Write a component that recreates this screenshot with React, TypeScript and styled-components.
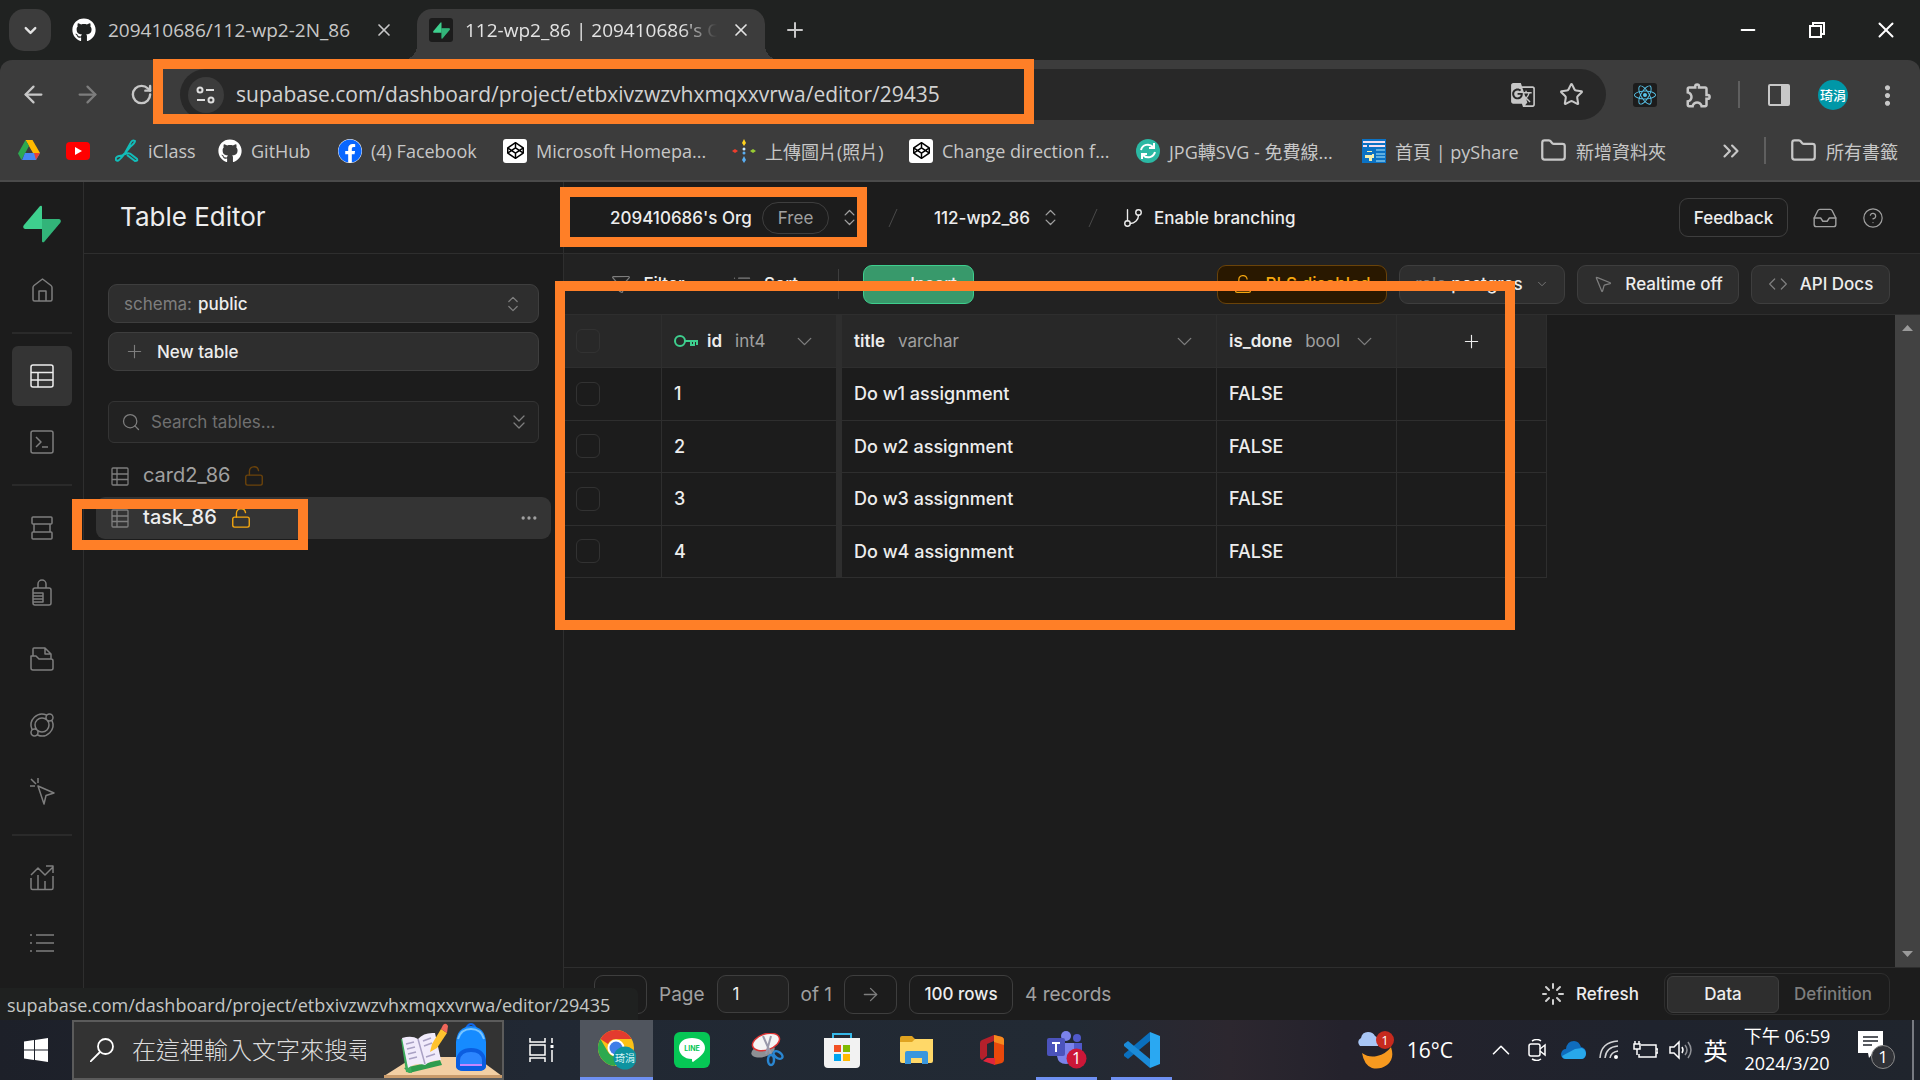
import React from "react";
import styled, { createGlobalStyle, css } from "styled-components";
import {
  ArrowLeft, ArrowRight, ChevronDown, ChevronUp, ChevronsDown, ChevronsRight,
  ChevronsUpDown, Code, Ellipsis, Filter, Folder, GitBranch, HelpCircle, Inbox, List, Loader,
  LockOpen, Minus, MousePointer2, Plus, RotateCw, Search, Star, X,
} from "lucide-react";
import { FaCodepen, FaFacebook, FaGithub, FaReact } from "react-icons/fa";
import { MdGTranslate, MdMoreVert, MdOutlineExtension } from "react-icons/md";

const ui = `"Open Sans", "Noto Sans CJK TC", sans-serif`;
const app = `Inter, "Noto Sans CJK TC", sans-serif`;
const c = {
  strip: "#202221", bar: "#3c3c3c", field: "#282828", barText: "#c7c7c7",
  bg: "#1c1c1c", surface: "#222222", raised: "#2e2e2e", line: "#2e2e2e", edge: "#3e3e3e",
  text: "#ededed", mute: "#a0a0a0", dim: "#7e7e7e", green: "#3ecf8e", mark: "#ff7f27",
};

const Global = createGlobalStyle`
  *, *::before, *::after { box-sizing: border-box; }
  body { margin: 0; background: ${c.bg}; overflow: hidden; }
  button, input { font: inherit; color: inherit; margin: 0; }
  button { background: none; border: 0; padding: 0; cursor: pointer; }
  svg { display: block; flex: none; }
  a { color: inherit; text-decoration: none; }
`;

const Screen = styled.div`
  position: relative;
  display: grid;
  grid-template-rows: auto minmax(0, 1fr) auto;
  height: 100vh;
  overflow: hidden;
  font-family: ${app};
  color: ${c.text};
`;

/* ---------- browser chrome ---------- */
const Browser = styled.header`
  background: ${c.strip};
  font-family: ${ui};
  color: ${c.barText};
  border-bottom: 2px solid #4a4a4a;
`;
const TabStrip = styled.div`
  display: flex;
  align-items: flex-end;
  height: 60px;
  padding-left: 9px;
`;
const TabSearch = styled.button`
  display: grid;
  place-items: center;
  width: 42px;
  height: 42px;
  margin-bottom: 9px;
  border-radius: 15px;
  background: ${c.bar};
`;
const Tab = styled.div<{ $active?: boolean }>`
  position: relative;
  display: flex;
  align-items: center;
  gap: 12px;
  width: 348px;
  height: 51px;
  padding: 0 12px 9px;
  margin-left: 9px;
  font-size: 19px;
  ${p => p.$active && css`
    color: #e3e3e3;
    background: ${c.bar};
    border-radius: 15px 15px 0 0;
    &::before, &::after {
      content: "";
      position: absolute;
      bottom: 0;
      left: -15px;
      width: 15px;
      height: 15px;
      background: radial-gradient(circle at 0 0, transparent 15px, ${c.bar} 15px);
    }
    &::after {
      left: 100%;
      background: radial-gradient(circle at 100% 0, transparent 15px, ${c.bar} 15px);
    }
  `}
`;
const TabTitle = styled.span<{ $fade?: boolean }>`
  flex: 1;
  min-width: 0;
  overflow: hidden;
  white-space: nowrap;
  line-height: 30px;
  ${p => p.$fade && css`mask-image: linear-gradient(90deg, #000 86%, transparent);`}
`;
const TabClose = styled.button`
  display: grid;
  place-items: center;
  width: 24px;
  height: 24px;
`;
const Favicon = styled.span`
  display: grid;
  place-items: center;
  width: 24px;
  height: 24px;
  border-radius: 3px;
  background: ${c.bg};
`;
const NewTab = styled(TabSearch)`
  margin-left: 9px;
  background: none;
`;
const WindowButtons = styled.div`
  display: flex;
  height: 60px;
  margin-left: auto;
  color: #fff;
`;
const WindowButton = styled.button`
  display: grid;
  place-items: center;
  width: 69px;
`;
const Toolbar = styled.div`
  display: flex;
  align-items: center;
  height: 69px;
  padding: 0 20px;
  border-radius: 12px 12px 0 0;
  background: ${c.bar};
`;
const NavButton = styled.button<{ $dim?: boolean }>`
  display: grid;
  place-items: center;
  width: 54px;
  height: 42px;
  color: ${p => (p.$dim ? "#7d7d7d" : c.barText)};
`;
const NavGroup = styled.div`
  display: flex;
  margin: 0 12px 0 -14px;
`;
const Omnibox = styled.div`
  flex: 1;
  display: flex;
  align-items: center;
  gap: 12px;
  height: 51px;
  padding: 0 20px 0 8px;
  border-radius: 26px;
  background: ${c.field};
`;
const SiteInfo = styled.button`
  display: grid;
  place-items: center;
  width: 36px;
  height: 36px;
  border-radius: 50%;
  background: ${c.bar};
`;
const Url = styled.input`
  flex: 1;
  min-width: 0;
  height: 48px;
  padding: 0 0 2px;
  border: 0;
  outline: 0;
  background: none;
  font-size: 21px;
  color: #d2d2d2;
`;
const IconButton = styled.button<{ $w?: number }>`
  display: grid;
  place-items: center;
  width: ${p => p.$w ?? 30}px;
  height: 30px;
`;
const Extensions = styled.div`
  display: flex;
  align-items: center;
  gap: 24px;
  margin-left: 24px;
`;
const Rule = styled.span`
  width: 2px;
  height: 27px;
  background: #5f5f5f;
`;
const Avatar = styled.span`
  display: grid;
  place-items: center;
  width: 30px;
  height: 30px;
  border-radius: 50%;
  background: #0097a7;
  color: #fff;
  font: 500 13px/1 "Noto Sans CJK TC", sans-serif;
`;
const Bookmarks = styled.nav`
  display: flex;
  align-items: center;
  height: 51px;
  padding: 0 20px 8px 18px;
  background: ${c.bar};
  font-size: 18px;
`;
const Bookmark = styled.a<{ $w: number }>`
  display: flex;
  align-items: center;
  gap: 9px;
  width: ${p => p.$w}px;
  height: 30px;
  white-space: nowrap;
`;
const AllBookmarks = styled(Bookmark)`
  margin-left: 24px;
`;
const Push = styled.span`
  flex: 1;
`;

/* ---------- dashboard shell ---------- */
const Dashboard = styled.div`
  position: relative;
  display: grid;
  grid-template-columns: 84px 480px minmax(0, 1fr);
  min-height: 0;
  background: ${c.bg};
`;
const Rail = styled.nav`
  display: flex;
  flex-direction: column;
  align-items: center;
  gap: 6px;
  padding-top: 23px;
  border-right: 1px solid ${c.line};
  overflow: hidden;
`;
const LogoLink = styled.a`
  display: block;
  height: 49px;
`;
const RailItem = styled.a<{ $active?: boolean }>`
  flex: none;
  display: grid;
  place-items: center;
  width: 60px;
  height: 60px;
  border-radius: 6px;
  color: ${p => (p.$active ? c.text : c.dim)};
  background: ${p => (p.$active ? "#343434" : "none")};
`;
const RailRule = styled.span`
  flex: none;
  width: 60px;
  height: 2px;
  margin: 6px 0;
  background: #2a2a2a;
`;
const Panel = styled.aside`
  border-right: 1px solid ${c.line};
  min-width: 0;
`;
const PanelTitle = styled.h1`
  height: 72px;
  margin: 0;
  padding-left: 36px;
  border-bottom: 1px solid ${c.line};
  font-size: 26px;
  font-weight: 400;
  line-height: 70px;
`;
const PanelTools = styled.div`
  display: flex;
  flex-direction: column;
  gap: 9px;
  padding: 30px 24px 12px;
`;
const WideButton = styled.button`
  display: flex;
  align-items: center;
  height: 39px;
  padding: 0 15px;
  border: 1px solid ${c.edge};
  border-radius: 9px;
  background: ${c.raised};
  font-size: 17px;
  font-weight: 500;
`;
const SchemaLabel = styled.span`
  margin-right: 6px;
  color: ${c.dim};
  font-weight: 400;
`;
const WideIcon = styled.span`
  margin-right: 12px;
  color: ${c.dim};
`;
const SearchBox = styled.label`
  display: flex;
  align-items: center;
  gap: 10px;
  height: 42px;
  margin-top: 21px;
  padding: 0 7px 0 12px;
  border: 1px solid #343434;
  border-radius: 6px;
  background: ${c.surface};
  color: ${c.dim};
  font-size: 17px;
`;
const SearchInput = styled.input`
  flex: 1;
  min-width: 0;
  padding: 0;
  border: 0;
  outline: 0;
  background: none;
  &::placeholder { color: #707070; opacity: 1; }
`;
const TableList = styled.ul`
  margin: 0;
  padding: 0 12px;
  list-style: none;
`;
const TableItem = styled.li<{ $active?: boolean }>`
  display: flex;
  align-items: center;
  height: 42px;
  padding: 0 12px 0 15px;
  border-radius: 9px;
  font-size: 20px;
  line-height: 40px;
  font-weight: ${p => (p.$active ? 500 : 400)};
  color: ${p => (p.$active ? c.text : c.mute)};
  background: ${p => (p.$active ? "#343434" : "none")};
`;
const TableLink = styled.a`
  height: 42px;
  margin: 0 13px 0 14px;
`;
const TableGlyph = styled.span`
  color: ${c.dim};
`;
const LockMark = styled.span<{ $dim?: boolean }>`
  color: ${p => (p.$dim ? "#6b430b" : "#f5a70f")};
`;
const RowMenu = styled.button`
  margin-left: auto;
  color: ${c.mute};
`;

const Main = styled.main`
  display: flex;
  flex-direction: column;
  min-width: 0;
  min-height: 0;
`;
const TopBar = styled.div`
  display: flex;
  align-items: center;
  flex: none;
  height: 72px;
  padding: 0 36px 0 46px;
  border-bottom: 1px solid ${c.line};
  font-size: 17px;
  font-weight: 500;
`;
const Crumb = styled.button<{ $w: number }>`
  display: flex;
  align-items: center;
  gap: 10px;
  width: ${p => p.$w}px;
  white-space: nowrap;
`;
const Plan = styled.span`
  height: 32px;
  padding: 0 15px;
  border: 1px solid ${c.edge};
  border-radius: 16px;
  color: ${c.mute};
  font-weight: 400;
  line-height: 30px;
`;
const CrumbArrows = styled.span`
  color: ${c.mute};
`;
const Slash = styled.span<{ $w: number }>`
  width: ${p => p.$w}px;
`;
const TopActions = styled.div`
  display: flex;
  align-items: center;
  gap: 24px;
  margin-left: auto;
  color: ${c.mute};
`;
type Tone = "plain" | "soft" | "green" | "amber" | "ghost";
const tones = {
  plain: css`border-color: ${c.edge};`,
  soft: css`border-color: ${c.edge}; background: ${c.raised};`,
  green: css`border-color: ${c.green}; background: #38996b;`,
  amber: css`border-color: #6a4309; background: #291800; color: #f5a70f;`,
  ghost: css`border-color: transparent;`,
};
const Button = styled.button<{ $tone: Tone; $w?: number }>`
  display: flex;
  align-items: center;
  justify-content: center;
  gap: 12px;
  ${p => p.$w && `width: ${p.$w}px;`}
  height: 39px;
  border: 1px solid;
  border-radius: 9px;
  color: ${c.text};
  font-size: 17px;
  font-weight: 500;
  white-space: nowrap;
  ${p => tones[p.$tone]}
`;
const ButtonIcon = styled.span`
  color: ${c.dim};
`;
const Role = styled.span`
  color: ${c.dim};
  margin-right: -7px;
`;
const GridTools = styled.div`
  display: flex;
  align-items: center;
  flex: none;
  gap: 12px;
  height: 61px;
  padding: 0 30px;
  border-bottom: 1px solid ${c.line};
  background: ${c.surface};
`;
const ToolRule = styled.span`
  width: 1px;
  height: 30px;
  margin: 0 12px 0 10px;
  background: ${c.edge};
`;
const GridArea = styled.div`
  display: flex;
  justify-content: space-between;
  flex: 1;
  min-height: 0;
`;
const Scrollbar = styled.div`
  display: flex;
  flex-direction: column;
  justify-content: space-between;
  align-items: center;
  width: 25px;
  padding: 10px 0;
  background: #424242;
`;
const DataTable = styled.table`
  align-self: flex-start;
  table-layout: fixed;
  width: 983px;
  height: 263px;
  border-collapse: separate;
  border-spacing: 0;
  font-size: 18px;
  font-weight: 500;
`;
const Cell = css<{ $frozen?: boolean }>`
  padding: 0 12px;
  border-bottom: 1px solid ${c.line};
  border-right: ${p => (p.$frozen ? 6 : 1)}px solid ${c.line};
  text-align: left;
`;
const Th = styled.th<{ $frozen?: boolean; $w: number }>`
  ${Cell}
  width: ${p => p.$w}px;
  height: 53px;
  background: #282828;
  font-size: 17px;
  font-weight: 600;
`;
const Td = styled.td<{ $frozen?: boolean }>`
  ${Cell}
`;
const ColumnHead = styled.div`
  display: flex;
  align-items: center;
  gap: 9px;
`;
const ColumnType = styled.span`
  margin-left: 4px;
  color: ${c.mute};
  font-weight: 400;
`;
const ColumnMenu = styled.button`
  margin: 0 7px 0 auto;
  color: ${c.dim};
`;
const AddColumn = styled.button`
  display: block;
  margin: 0 auto;
`;
const Check = styled.input.attrs({ type: "checkbox" })`
  appearance: none;
  display: block;
  width: 24px;
  height: 24px;
  border: 1px solid #323232;
  border-radius: 6px;
`;
const Footer = styled.footer`
  display: flex;
  align-items: center;
  flex: none;
  gap: 12px;
  height: 53px;
  padding: 0 30px;
  border-top: 1px solid ${c.line};
  color: ${c.mute};
  font-size: 19px;
`;
const Pager = styled.label`
  display: flex;
  align-items: center;
  gap: 12px;
`;
const PageInput = styled.input`
  width: 72px;
  height: 38px;
  padding: 0 15px;
  border: 1px solid ${c.edge};
  border-radius: 9px;
  background: ${c.surface};
  color: ${c.text};
  font-size: 17px;
`;
const Switcher = styled.div`
  display: flex;
  align-items: center;
  height: 42px;
  padding: 2px;
  border: 1px solid ${c.line};
  border-radius: 9px;
`;
const SwitchTab = styled.button<{ $active?: boolean }>`
  width: ${p => (p.$active ? 112 : 108)}px;
  height: 37px;
  border: 1px solid ${p => (p.$active ? c.edge : "transparent")};
  border-radius: 6px;
  background: ${p => (p.$active ? c.raised : "none")};
  color: ${p => (p.$active ? c.text : c.dim)};
  font-size: 17px;
  font-weight: 500;
`;
const StatusBubble = styled.div`
  position: absolute;
  left: 0;
  bottom: 0;
  width: 638px;
  height: 32px;
  padding-left: 7px;
  border-top-right-radius: 6px;
  background: #1f2120;
  color: #c4c7c5;
  font: 18px/35px ${ui};
  white-space: nowrap;
`;

/* ---------- taskbar ---------- */
const Taskbar = styled.footer`
  display: flex;
  height: 60px;
  background: linear-gradient(90deg, #1d2029, #212833 28%, #222a34 56%, #2c272f 64%, #24222c 70%, #1f232d 86%, #20252d);
  color: #fff;
  font-family: ${ui};
`;
const StartButton = styled.button`
  display: grid;
  place-items: center;
  width: 72px;
`;
const TaskSearch = styled.label`
  display: flex;
  align-items: center;
  gap: 18px;
  width: 432px;
  padding-left: 16px;
  border: 2px solid #5b5b5b;
  background: #333;
`;
const TaskInput = styled.input`
  flex: 1;
  min-width: 0;
  padding: 0 0 4px;
  border: 0;
  outline: 0;
  background: none;
  font: 300 24px "Noto Sans CJK TC", sans-serif;
  &::placeholder { color: #dcdcdc; opacity: 1; }
`;
const TaskButton = styled.button<{ $active?: boolean; $open?: boolean }>`
  display: grid;
  place-items: center;
  width: 73px;
  margin: 0 1px;
  border: solid transparent;
  border-width: 3px 0;
  ${p => p.$active && css`background: #50555e; border-top-color: #50555e; border-bottom-color: #6e90f2;`}
  ${p => p.$open && css`background: linear-gradient(#6e90f2, #6e90f2) 50% 100% / 61px 3px no-repeat border-box;`}
`;
const Tray = styled.div`
  display: flex;
  align-items: center;
  margin-left: auto;
`;
const TrayButton = styled.button<{ $w: number }>`
  display: grid;
  place-items: center;
  width: ${p => p.$w}px;
  height: 60px;
`;
const Weather = styled.button`
  display: flex;
  align-items: center;
  gap: 12px;
  margin-right: 30px;
  font-size: 21px;
`;
const Clock = styled.time`
  width: 110px;
  text-align: center;
  font-size: 18px;
  line-height: 27px;
`;
const InputMode = styled.span`
  font: 400 24px/1 "Noto Sans CJK TC", sans-serif;
`;
const DesktopEdge = styled.span`
  width: 2px;
  height: 60px;
  margin-right: 6px;
  background: #777b82;
`;

/* Hand-drawn frames laid over the whole screen */
const Frame = styled.span<{ $x: number; $y: number; $w: number; $h: number }>`
  position: absolute;
  left: ${p => p.$x}px;
  top: ${p => p.$y}px;
  width: ${p => p.$w}px;
  height: ${p => p.$h}px;
  border: 10px solid ${c.mark};
  pointer-events: none;
`;

/* ---------- drawings ---------- */
const SupabaseMark = ({ size }: { size: number }) => (
  <svg width={size} height={size} viewBox="0 0 38 38">
    <path d="M19 14h17q3 1 1 4L21 37q-2 1-2-1z" fill="#249361" />
    <path d="M19 24H2q-3-1-1-4L17 1q2-1 2 1z" fill={c.green} />
    <path d="M19 14h17q3 1 1 4L21 37q-2 1-2-1z" fill={c.green} opacity=".55" />
  </svg>
);
const railPaths: Record<string, string> = {
  home: "M12.5 1 21 7.5q1 .8 1 2V21.500q0 1.500-1.500 1.500h-16Q3 23 3 21.500v-12q0-1.200 1-2zM9 23V13h7v10",
  table: "M3 1h18q2 0 2 2v18q0 2-2 2H3q-2 0-2-2V3q0-2 2-2zM1 8.500h22M1 16h22M8 8.500V23",
  sql: "M3 1h18q2 0 2 2v18q0 2-2 2H3q-2 0-2-2V3q0-2 2-2zM6 7l5 5-5 5M12 17h6",
  database: "M3 1h18q1 0 1 1v5q0 1-1 1H3q-1 0-1-1V2q0-1 1-1zM4 8v8M20 8v8M3 16h18q1 0 1 1v5q0 1-1 1H3q-1 0-1-1v-5q0-1 1-1z",
  auth: "M8 6V2a4 4 0 0 1 8 0v4M5 6h14q2 0 2 2v13q0 2-2 2H5q-2 0-2-2V8q0-2 2-2zM3 11h10v9H3M3 14h10M3 17h10",
  storage: "M1 8h5l3 3h12q2 0 2 2v7q0 2-2 2H3q-2 0-2-2zM3 8V1q0-1 1-1h11l6 6v5M15 0v6h6",
  functions: "M16.500 1A11 11 0 0 0 2 15.500M7.500 21A11 11 0 0 0 22 6.500M12 4a7 7 0 1 0 0 14 7 7 0 0 0 0-14zM19.500 0a3.500 3.500 0 1 0 0 7 3.500 3.500 0 0 0 0-7zM4.500 15a3.500 3.500 0 1 0 0 7 3.500 3.500 0 0 0 0-7z",
  realtime: "M8 6l16 7-8 2.500L14 24zM8-2v5M1-1l5 5M0 6h5",
  reports: "M1 9l7-7 7 7 8-8M16 0h7v7M1 12v10q0 1.500 1.500 1.500h19q1.500 0 1.500-1.500V10M8 9v14M15 15v8",
  list: "M0 3h2M0 11h2M0 19h2M6 3h18M6 11h18M6 19h18",
};
const RailIcon = ({ name }: { name: string }) => (
  <svg width="24" height="24" viewBox="0 0 24 24" overflow="visible" fill="none" stroke="currentColor" strokeWidth="1.500" strokeLinejoin="round">
    <path d={railPaths[name]} />
  </svg>
);
const TableGlyphIcon = () => (
  <svg width="18" height="19" viewBox="0 0 18 19" fill="none" stroke="currentColor" strokeWidth="1.300"><rect x="1" y="1" width="16" height="17" rx="1" /><path d="M6 1v17M1 7h16M1 12.500h16" /></svg>
);
const SlashIcon = () => (
  <svg width="10" height="18" viewBox="0 0 10 18" stroke="#4a4a4a" fill="none"><path d="M9 0 1 18" /></svg>
);
const KeyIcon = () => (
  <svg width="24" height="15" viewBox="0 0 24 15" fill="none" stroke={c.green} strokeWidth="2">
    <circle cx="6" cy="7" r="5" /><path d="M11 7h12v4M17 7v4h3V7" />
  </svg>
);
const DriveIcon = () => (
  <svg width="22" height="21" viewBox="0 0 22 21">
    <path d="M7.500 0h7l7.500 13h-7z" fill="#ffba00" /><path d="M7.500 0 11 6 3.500 20 0 13.500z" fill="#2da94f" />
    <path d="M4 20l3-7h15l-4 7z" fill="#4688f4" /><path d="M16 13h6l-4 7z" fill="#ea4335" />
  </svg>
);
const YoutubeIcon = () => (
  <svg width="24" height="18" viewBox="0 0 24 18"><rect width="24" height="18" rx="4" fill="red" /><path d="M9 5l7 4-7 4z" fill="#fff" /></svg>
);
const IClassIcon = () => (
  <svg width="24" height="24" viewBox="0 0 24 24" fill="none" stroke="#12bdb9" strokeWidth="2">
    <path d="M20 2q-3-2-5 3l-5 9q-2 3-6 3-4 1-3 4 2 2 5-2l9-11q5-4 5-6zM10 15q4-2 7 1l5 4q1 2-2 2l-8-6" />
  </svg>
);
const SparkIcon = () => (
  <svg width="24" height="24" viewBox="0 0 24 24">
    <path d="M12 0l2 4-2 3-2-3z" fill="#ffd21e" /><path d="M0 12l3-2 3 2-3 2z" fill="#ef3e2d" />
    <path d="M18 12l3-2 3 2-3 2z" fill="#9c3" /><path d="M12 17l2 4-2 3-2-3z" fill="#5aaef2" />
    <circle cx="12" cy="10" r="1.500" fill="#c8e6ff" /><circle cx="12" cy="14" r="1.500" fill="#5aaef2" />
  </svg>
);
const CodepenIcon = () => (
  <svg width="24" height="24" viewBox="0 0 24 24"><rect width="24" height="24" rx="3" fill="#fff" /><g transform="translate(4 3)" color="#000"><FaCodepen size={17} /></g></svg>
);
const ConvertIcon = () => (
  <svg width="24" height="24" viewBox="0 0 24 24" fill="none" stroke="#fff" strokeWidth="2">
    <circle cx="12" cy="12" r="12" fill="#2bb8a3" stroke="none" />
    <path d="M5 11a7 7 0 0 1 12-3M19 13a7 7 0 0 1-12 3M18 4v5h-5M6 20v-5h5" />
  </svg>
);
const PyShareIcon = () => (
  <svg width="24" height="24" viewBox="0 0 24 24">
    <rect width="24" height="24" fill="#0b72c4" /><path d="M1 2h22v2H1zM1 6h4v2H1zM7 6h16v2H7z" fill="#f4dff0" />
    <path d="M14 11h9M14 15h9M14 18h9M14 22h9" stroke="#7cc3ea" strokeWidth="1.500" /><path d="M5 12h5v4H3v3h4v3h3v-3h2v-4h-2v-2H5z" fill="#f3efb0" />
  </svg>
);
const TuneIcon = () => (
  <svg width="20" height="18" viewBox="0 0 20 18" fill="none" stroke="#dedede" strokeWidth="2">
    <circle cx="4" cy="4" r="2.500" /><path d="M10 4h8M1 14h8" /><circle cx="15" cy="14" r="2.500" />
  </svg>
);
const SidePanelIcon = () => (
  <svg width="22" height="22" viewBox="0 0 22 22"><rect x="1" y="1" width="20" height="20" rx="1" fill="none" stroke={c.barText} strokeWidth="2" /><path d="M13 1h8v20h-8z" fill={c.barText} /></svg>
);
const RestoreIcon = () => (
  <svg width="16" height="16" viewBox="0 0 16 16" fill="none" stroke="#fff" strokeWidth="2"><path d="M1 4h11v11H1zM4 4V1h11v11h-3" /></svg>
);
const Triangle = ({ down }: { down?: boolean }) => (
  <svg width="11" height="6" viewBox="0 0 11 6"><path d={down ? "M0 0h11L5.500 6z" : "M0 6h11L5.500 0z"} fill="#9a9a9a" /></svg>
);
const SpinnerIcon = () => (
  <svg width="22" height="22" viewBox="0 0 22 22" stroke="#d0d0d0" strokeWidth="2" strokeLinecap="round">
    <path d="M11 1v4M11 17v4M1 11h3M17 11h4M4 4l3 3M15 15l3 3M4 18l3-3M15 7l3-3" />
  </svg>
);
const WindowsIcon = () => (
  <svg width="24" height="24" viewBox="0 0 24 24" fill="#fff"><path d="M0 3.500 10 2v9.500H0zM11 2l13-2v11.500H11zM0 12.500h10V22L0 20.500zM11 12.500h13V24l-13-2z" /></svg>
);
const MagnifierIcon = () => (
  <svg width="24" height="24" viewBox="0 0 24 24" fill="none" stroke="#fff" strokeWidth="1.800"><circle cx="15.500" cy="8.500" r="7.500" /><path d="M10 14 0 24" /></svg>
);
const StudyArt = () => (
  <svg width="118" height="56" viewBox="0 0 118 56">
    <path d="M30 35h62l26 19H0z" fill="#f3cfa3" /><path d="M0 53h118v3H0z" fill="#c99b6b" />
    <path d="M20 46l36-8 2 5-33 8z" fill="#2e9c4e" /><path d="M17 17l5 33 6 1-6-33z" fill="#3cab5a" />
    <path d="M18 16q10-3 16 1 6-7 17-6l6 27q-10 0-16 5-9-3-17 3z" fill="#f1ebfb" />
    <path d="M34 17l7 25M22 22l8-2M23 27l8-2M24 32l8-2M25 37l8-2M39 19l8-3M40 24l8-3M42 35l9-3" stroke="#a9a1c4" strokeWidth="1.500" />
    <path d="M46 30l2-8L57 7l6 4-10 15z" fill="#ffc22e" /><path d="M57 7l2-4q3-3 5 1l-1 7z" fill="#f0665a" />
    <path d="M82 6q5-8 10 0" fill="none" stroke="#1266e8" strokeWidth="2" />
    <path d="M72 20q1-15 15-16 14 1 15 16v24q-1 5-8 5H80q-7 0-8-5z" fill="#168bff" />
    <path d="M72 38q2-12 15-12t15 12v7q-1 4-8 4H80q-7 0-8-4z" fill="#0b5de0" />
    <path d="M76 38q1-8 11-8t11 8v6H76z" fill="#2c86ff" /><path d="M76 43h22" stroke="#c486ff" strokeWidth="2" />
    <path d="M74 17q3-10 13-10t13 10" fill="none" stroke="#77c4ff" strokeWidth="2" />
  </svg>
);
const TaskViewIcon = () => (
  <svg width="26" height="24" viewBox="0 0 26 24" fill="none" stroke="#fff" strokeWidth="1.500"><path d="M1 0v4h15V0M1 7h15v10H1zM1 24v-4h15v4M23 0v5M23 12v12" /><path d="M21.500 7h3v3h-3z" fill="#fff" stroke="none" /></svg>
);
const ChromeIcon = () => (
  <svg width="38" height="40" viewBox="0 0 38 40">
    <circle cx="18" cy="18" r="18" fill="#fbc116" /><path d="M2.400 9A18 18 0 0 1 33.600 9H18a9 9 0 0 0-8 5z" fill="#e33b2e" />
    <path d="M2.400 9A18 18 0 0 0 17 36l8-13a9 9 0 0 1-15-1z" fill="#2da94f" /><circle cx="18" cy="18" r="8.500" fill="#fff" /><circle cx="18" cy="18" r="6.500" fill="#3f7ee8" />
    <circle cx="27" cy="28" r="11.500" fill="#0e93a0" />
    <text x="27" y="32" textAnchor="middle" fill="#d5f4f5" fontSize="10" fontFamily="Noto Sans CJK TC">琦涓</text>
  </svg>
);
const LineIcon = () => (
  <svg width="36" height="36" viewBox="0 0 36 36"><rect width="36" height="36" rx="6" fill="#06c755" /><path d="M18 6c8 0 13 4 13 10 0 6-7 10-12 14-1 0-1-1-1-3C10 27 5 22 5 16S10 6 18 6z" fill="#fff" /><text x="18" y="19" textAnchor="middle" fill="#06c755" fontSize="7" fontWeight="700" fontFamily="Inter">LINE</text></svg>
);
const SnipIcon = () => (
  <svg width="34" height="34" viewBox="0 0 34 34"><ellipse cx="13" cy="18" rx="12" ry="6" fill="#8e9094" transform="rotate(-15 13 18)" /><ellipse cx="16" cy="9" rx="14" ry="8" fill="#f4f4f4" stroke="#d33" strokeWidth="1.500" transform="rotate(-18 16 9)" /><path d="M13 3l8 18M21 3l-5 18" stroke="#99a" strokeWidth="2" /><g fill="none" stroke="#2a86d1" strokeWidth="2.500"><ellipse cx="21" cy="27" rx="3" ry="5" /><ellipse cx="28" cy="22" rx="5" ry="3" transform="rotate(35 28 22)" /></g></svg>
);
const StoreIcon = () => (
  <svg width="36" height="36" viewBox="0 0 36 36"><path d="M9 7V2h18v5" fill="none" stroke="#35b8e8" strokeWidth="2" /><path d="M0 6h36v26q0 4-4 4H4q-4 0-4-4z" fill="#f2f2f2" /><path d="M10 13h7v7h-7z" fill="#f25022" /><path d="M19 13h7v7h-7z" fill="#7fba00" /><path d="M10 22h7v7h-7z" fill="#00a4ef" /><path d="M19 22h7v7h-7z" fill="#ffb900" /></svg>
);
const ExplorerIcon = () => (
  <svg width="33" height="28" viewBox="0 0 33 28"><path d="M0 2q0-2 2-2h10l3 3h18v6H0z" fill="#e0a320" /><path d="M0 6h12l3-3h18v22q0 2-2 2H2q-2 0-2-2z" fill="#ffd868" /><path d="M5 28V17q0-2 2-2h19q2 0 2 2v11h-6v-6H11v6z" fill="#3a96dd" /></svg>
);
const OfficeIcon = () => (
  <svg width="26" height="30" viewBox="0 0 26 30"><path d="M1 8q0-2 2-3L15 0v6l-7 3v12l-5 4q-2-1-2-3z" fill="#b3202b" /><path d="M15 0l8 2q2 1 2 3v20q0 2-2 3l-8 2z" fill="#e8480b" /><path d="M15 0l8 2q2 1 2 3v5l-10-3z" fill="#f58a1f" /><path d="M4 26l4-3h8v7z" fill="#e0263c" /></svg>
);
const TeamsIcon = () => (
  <svg width="40" height="38" viewBox="0 0 40 38"><circle cx="19" cy="5" r="5" fill="#7b83eb" /><circle cx="30" cy="7" r="4" fill="#5059c9" /><path d="M10 12h18v13q-2 8-9 8-8 0-9-8z" fill="#7b83eb" /><path d="M27 12h8v12q-3 5-8 3z" fill="#5059c9" /><rect y="7" width="18" height="18" rx="2" fill="#4b53bc" /><path d="M5 12h8M9 12v9" stroke="#fff" strokeWidth="2" /><circle cx="29.500" cy="27.500" r="10" fill="#cc1738" /><text x="29.500" y="33" textAnchor="middle" fill="#fff" fontSize="16" fontFamily="Open Sans">1</text></svg>
);
const CodeIcon = () => (
  <svg width="36" height="36" viewBox="0 0 36 36"><path d="M26 9 4 27l-4-3v-2L26 0z" fill="#0a6fbd" /><path d="M26 27 4 9l-4 3v2l26 22z" fill="#1b8bd8" /><path d="M26 0l10 4v28l-10 4z" fill="#2aa8f2" /></svg>
);
const WeatherIcon = () => (
  <svg width="37" height="38" viewBox="0 0 37 38"><path d="M4 22q7 5 15 3 9-2 14-9 4 12-4 18-7 5-15 3-8-3-10-15z" fill="#f7991f" /><path d="M2 15q-4-5 1-8 1-6 7-6 5 0 7 4 5 2 3 10z" fill="#a9c6f5" /><circle cx="27" cy="9" r="9" fill="#c62a1e" /><text x="27" y="14" textAnchor="middle" fill="#fff" fontSize="13" fontFamily="Open Sans">1</text></svg>
);
const MeetIcon = () => (
  <svg width="18" height="22" viewBox="0 0 18 22" fill="none" stroke="#fff" strokeWidth="1.500"><rect x="1" y="5" width="11" height="12" rx="2" /><path d="M12 10l5-4v10l-5-4M4 2q5-3 9 0M4 20q5 3 9 0" /></svg>
);
const CloudIcon = () => (
  <svg width="25" height="18" viewBox="0 0 25 18"><path d="M5 8q1-8 8-8 5 0 7 6 5 1 5 6 0 6-5 6H5q-5 0-5-5 1-5 5-5z" fill="#0f6cbd" /><path d="M1 15 14 8l7-1q4 2 4 6-1 5-5 5H5q-3 0-4-3z" fill="#28a8ea" /></svg>
);
const WifiIcon = () => (
  <svg width="20" height="20" viewBox="0 0 20 20" fill="none" stroke="#fff" strokeWidth="1.500"><path d="M1 18Q2 2 19 1M6 18Q7 7 19 6M11 18q1-6 8-7" opacity=".8" /><circle cx="17" cy="17" r="2" fill="#fff" stroke="none" /></svg>
);
const BatteryIcon = () => (
  <svg width="25" height="18" viewBox="0 0 25 18" fill="none" stroke="#fff" strokeWidth="1.500"><path d="M8 4h15v12H6v-3M23 8h2v4h-2M1 3h6v5H1zM2 0v3M6 0v3M4 8v6" /></svg>
);
const SpeakerIcon = () => (
  <svg width="24" height="20" viewBox="0 0 24 20" fill="none" stroke="#fff" strokeWidth="1.500"><path d="M1 7h4l5-5v16l-5-5H1zM13 7q2 3 0 6" /><path d="M16 5q4 5 0 10M19 2q6 8 0 16" opacity=".5" /></svg>
);
const NoticeIcon = () => (
  <svg width="38" height="38" viewBox="0 0 38 38"><path d="M0 0h25v22H15l-4 5-1-5H0z" fill="#fff" /><path d="M5 6h15M5 10h15M5 14h9" stroke="#20252d" strokeWidth="1.500" /><circle cx="25" cy="26" r="11.500" fill="#303237" stroke="#8a8a8a" /><text x="25" y="32" textAnchor="middle" fill="#fff" fontSize="17" fontFamily="Open Sans">1</text></svg>
);

const bookmarks = [
  { w: 48, icon: <DriveIcon />, label: "Drive", name: "" },
  { w: 49, icon: <YoutubeIcon />, label: "YouTube", name: "" },
  { w: 103, icon: <IClassIcon />, name: "iClass" },
  { w: 120, icon: <FaGithub size={24} color="#fff" />, name: "GitHub" },
  { w: 165, icon: <FaFacebook size={24} color="#0866ff" style={{ background: "#fff", borderRadius: 12 }} />, name: "(4) Facebook" },
  { w: 229, icon: <CodepenIcon />, name: "Microsoft Homepa..." },
  { w: 177, icon: <SparkIcon />, name: "上傳圖片(照片)" },
  { w: 227, icon: <CodepenIcon />, name: "Change direction f..." },
  { w: 226, icon: <ConvertIcon />, name: "JPG轉SVG - 免費線..." },
  { w: 178, icon: <PyShareIcon />, name: "首頁 | pyShare" },
  { w: 140, icon: <Folder size={27} />, name: "新增資料夾" },
];
const rail = [
  ["home"], ["table", "sql"], ["database", "auth", "storage", "functions", "realtime"], ["reports", "list"],
];
const rows = [1, 2, 3, 4].map(id => ({ id, title: `Do w${id} assignment`, done: "FALSE" }));
const thin = { strokeWidth: 1.5 };
const fine = { strokeWidth: 1.3 };

export default function App() {
  return (
    <Screen>
      <Global />
      <Browser>
        <TabStrip>
          <TabSearch aria-label="Search tabs"><ChevronDown size={19} strokeWidth={3} color="#e3e3e3" /></TabSearch>
          <Tab>
            <FaGithub size={24} color="#fff" />
            <TabTitle>209410686/112-wp2-2N_86</TabTitle>
            <TabClose aria-label="Close tab"><X size={20} /></TabClose>
          </Tab>
          <Tab $active>
            <Favicon><SupabaseMark size={17} /></Favicon>
            <TabTitle $fade>112-wp2_86 | 209410686's Org</TabTitle>
            <TabClose aria-label="Close tab"><X size={20} /></TabClose>
          </Tab>
          <NewTab aria-label="New tab"><Plus size={24} /></NewTab>
          <WindowButtons>
            <WindowButton aria-label="Minimize"><Minus size={22} /></WindowButton>
            <WindowButton aria-label="Restore"><RestoreIcon /></WindowButton>
            <WindowButton aria-label="Close"><X size={26} strokeWidth={1.8} /></WindowButton>
          </WindowButtons>
        </TabStrip>
        <Toolbar>
          <NavGroup>
            <NavButton aria-label="Back"><ArrowLeft size={27} /></NavButton>
            <NavButton $dim aria-label="Forward"><ArrowRight size={27} /></NavButton>
            <NavButton aria-label="Reload"><RotateCw size={23} strokeWidth={2.5} /></NavButton>
          </NavGroup>
          <Omnibox>
            <SiteInfo aria-label="Site information"><TuneIcon /></SiteInfo>
            <Url aria-label="Address" defaultValue="supabase.com/dashboard/project/etbxivzwzvhxmqxxvrwa/editor/29435" />
            <IconButton $w={42} aria-label="Translate"><MdGTranslate size={26} /></IconButton>
            <IconButton aria-label="Bookmark"><Star size={25} /></IconButton>
          </Omnibox>
          <Extensions>
            <IconButton aria-label="React tools"><Favicon><FaReact size={22} color="#58c4ea" /></Favicon></IconButton>
            <IconButton aria-label="Extensions"><MdOutlineExtension size={30} /></IconButton>
            <Rule />
            <IconButton aria-label="Side panel"><SidePanelIcon /></IconButton>
            <Avatar>琦涓</Avatar>
            <IconButton $w={28} aria-label="Menu"><MdMoreVert size={31} /></IconButton>
          </Extensions>
        </Toolbar>
        <Bookmarks>
          {bookmarks.map((b, i) => (
            <Bookmark key={i} href="#" aria-label={b.label} $w={b.w}>{b.icon}{b.name}</Bookmark>
          ))}
          <Push />
          <IconButton $w={66} aria-label="More bookmarks"><ChevronsRight size={26} /></IconButton>
          <Rule />
          <AllBookmarks href="#" $w={110}><Folder size={27} />所有書籤</AllBookmarks>
        </Bookmarks>
      </Browser>

      <Dashboard>
        <Rail>
          <LogoLink href="#" aria-label="Home"><SupabaseMark size={38} /></LogoLink>
          {rail.map((group, i) => (
            <React.Fragment key={i}>
              {i > 0 && <RailRule />}
              {group.map(name => (
                <RailItem key={name} href="#" aria-label={name} $active={name === "table"}><RailIcon name={name} /></RailItem>
              ))}
            </React.Fragment>
          ))}
        </Rail>
        <Panel>
          <PanelTitle>Table Editor</PanelTitle>
          <PanelTools>
            <WideButton aria-haspopup="listbox">
              <SchemaLabel>schema:</SchemaLabel>public<Push />
              <ChevronsUpDown size={20} color={c.dim} {...thin} />
            </WideButton>
            <WideButton><WideIcon><Plus size={21} {...fine} /></WideIcon>New table</WideButton>
            <SearchBox>
              <Search size={20} {...thin} />
              <SearchInput placeholder="Search tables..." aria-label="Search tables" />
              <ChevronsDown size={24} {...fine} />
            </SearchBox>
          </PanelTools>
          <TableList>
            {["card2_86", "task_86"].map((name, i) => (
              <TableItem key={name} $active={i === 1}>
                <TableGlyph><TableGlyphIcon /></TableGlyph>
                <TableLink href="#">{name}</TableLink>
                <LockMark $dim={i === 0}><LockOpen size={22} {...thin} /></LockMark>
                {i === 1 && <RowMenu aria-label="Table options"><Ellipsis size={20} /></RowMenu>}
              </TableItem>
            ))}
          </TableList>
        </Panel>
        <Main>
          <TopBar>
            <Crumb $w={278}>209410686's Org<Plan>Free</Plan><CrumbArrows><ChevronsUpDown size={21} {...thin} /></CrumbArrows></Crumb>
            <Slash $w={46}><SlashIcon /></Slash>
            <Crumb $w={154}>112-wp2_86<CrumbArrows><ChevronsUpDown size={21} {...thin} /></CrumbArrows></Crumb>
            <Slash $w={34}><SlashIcon /></Slash>
            <Crumb $w={180}><GitBranch size={22} {...thin} />Enable branching</Crumb>
            <TopActions>
              <Button $tone="plain" $w={109}>Feedback</Button>
              <Inbox size={26} {...fine} />
              <HelpCircle size={22} {...fine} />
            </TopActions>
          </TopBar>
          <GridTools>
            <Button $tone="ghost" $w={108}><ButtonIcon><Filter size={20} {...thin} /></ButtonIcon>Filter</Button>
            <Button $tone="ghost" $w={102}><ButtonIcon><List size={20} {...thin} /></ButtonIcon>Sort</Button>
            <ToolRule />
            <Button $tone="green" $w={111}><ChevronDown size={18} strokeWidth={1} color="#38996b" />Insert</Button>
            <Push />
            <Button $tone="amber" $w={170}><LockOpen size={20} {...thin} />RLS disabled</Button>
            <Button $tone="soft" $w={166}><Role>role</Role>postgres<ButtonIcon><ChevronDown size={14} {...thin} /></ButtonIcon></Button>
            <Button $tone="soft" $w={162}><ButtonIcon><MousePointer2 size={20} {...thin} /></ButtonIcon>Realtime off</Button>
            <Button $tone="soft" $w={139}><ButtonIcon><Code size={20} {...thin} /></ButtonIcon>API Docs</Button>
          </GridTools>
          <GridArea>
            <DataTable>
              <thead>
                <tr>
                  <Th $w={98}><Check aria-label="Select all rows" /></Th>
                  <Th $w={180} $frozen><ColumnHead><KeyIcon />id<ColumnType>int4</ColumnType><ColumnMenu aria-label="id menu"><ChevronDown size={25} {...fine} /></ColumnMenu></ColumnHead></Th>
                  <Th $w={375}><ColumnHead>title<ColumnType>varchar</ColumnType><ColumnMenu aria-label="title menu"><ChevronDown size={25} {...fine} /></ColumnMenu></ColumnHead></Th>
                  <Th $w={180}><ColumnHead>is_done<ColumnType>bool</ColumnType><ColumnMenu aria-label="is_done menu"><ChevronDown size={25} {...fine} /></ColumnMenu></ColumnHead></Th>
                  <Th $w={150}><AddColumn aria-label="Add column"><Plus size={21} {...fine} /></AddColumn></Th>
                </tr>
              </thead>
              <tbody>
                {rows.map(r => (
                  <tr key={r.id}>
                    <Td><Check aria-label={`Select row ${r.id}`} /></Td>
                    <Td $frozen>{r.id}</Td>
                    <Td>{r.title}</Td>
                    <Td>{r.done}</Td>
                    <Td />
                  </tr>
                ))}
              </tbody>
            </DataTable>
            <Scrollbar><Triangle /><Triangle down /></Scrollbar>
          </GridArea>
          <Footer>
            <Button $tone="plain" $w={53} aria-label="Previous page" />
            <Pager>Page<PageInput defaultValue="1" />of 1</Pager>
            <Button $tone="plain" $w={53} aria-label="Next page"><ButtonIcon><ArrowRight size={21} {...thin} /></ButtonIcon></Button>
            <Button $tone="plain" $w={104}>100 rows</Button>
            4 records
            <Push />
            <Button $tone="ghost" $w={123}><SpinnerIcon />Refresh</Button>
            <Switcher>
              <SwitchTab $active>Data</SwitchTab>
              <SwitchTab>Definition</SwitchTab>
            </Switcher>
          </Footer>
        </Main>
        <StatusBubble>supabase.com/dashboard/project/etbxivzwzvhxmqxxvrwa/editor/29435</StatusBubble>
      </Dashboard>

      <Taskbar>
        <StartButton aria-label="Start"><WindowsIcon /></StartButton>
        <TaskSearch>
          <MagnifierIcon />
          <TaskInput placeholder="在這裡輸入文字來搜尋" aria-label="搜尋" />
          <StudyArt />
        </TaskSearch>
        <TaskButton aria-label="Task view"><TaskViewIcon /></TaskButton>
        <TaskButton $active aria-label="Chrome"><ChromeIcon /></TaskButton>
        <TaskButton aria-label="LINE"><LineIcon /></TaskButton>
        <TaskButton aria-label="Snipping tool"><SnipIcon /></TaskButton>
        <TaskButton aria-label="Store"><StoreIcon /></TaskButton>
        <TaskButton aria-label="Explorer"><ExplorerIcon /></TaskButton>
        <TaskButton aria-label="Office"><OfficeIcon /></TaskButton>
        <TaskButton $open aria-label="Teams"><TeamsIcon /></TaskButton>
        <TaskButton $open aria-label="Code editor"><CodeIcon /></TaskButton>
        <Tray>
          <Weather><WeatherIcon />16°C</Weather>
          <TrayButton $w={36} aria-label="Hidden icons"><ChevronUp size={30} {...fine} /></TrayButton>
          <TrayButton $w={36} aria-label="Meet now"><MeetIcon /></TrayButton>
          <TrayButton $w={36} aria-label="OneDrive"><CloudIcon /></TrayButton>
          <TrayButton $w={36} aria-label="Network"><WifiIcon /></TrayButton>
          <TrayButton $w={36} aria-label="Battery"><BatteryIcon /></TrayButton>
          <TrayButton $w={36} aria-label="Volume"><SpeakerIcon /></TrayButton>
          <TrayButton $w={33} aria-label="Input mode"><InputMode>英</InputMode></TrayButton>
          <Clock>下午 06:59<br />2024/3/20</Clock>
          <TrayButton $w={70} aria-label="Notifications"><NoticeIcon /></TrayButton>
          <DesktopEdge />
        </Tray>
      </Taskbar>

      <Frame $x={153} $y={59} $w={881} $h={65} />
      <Frame $x={560} $y={187} $w={307} $h={60} />
      <Frame $x={555} $y={281} $w={960} $h={349} />
      <Frame $x={72} $y={499} $w={236} $h={51} />
    </Screen>
  );
}
